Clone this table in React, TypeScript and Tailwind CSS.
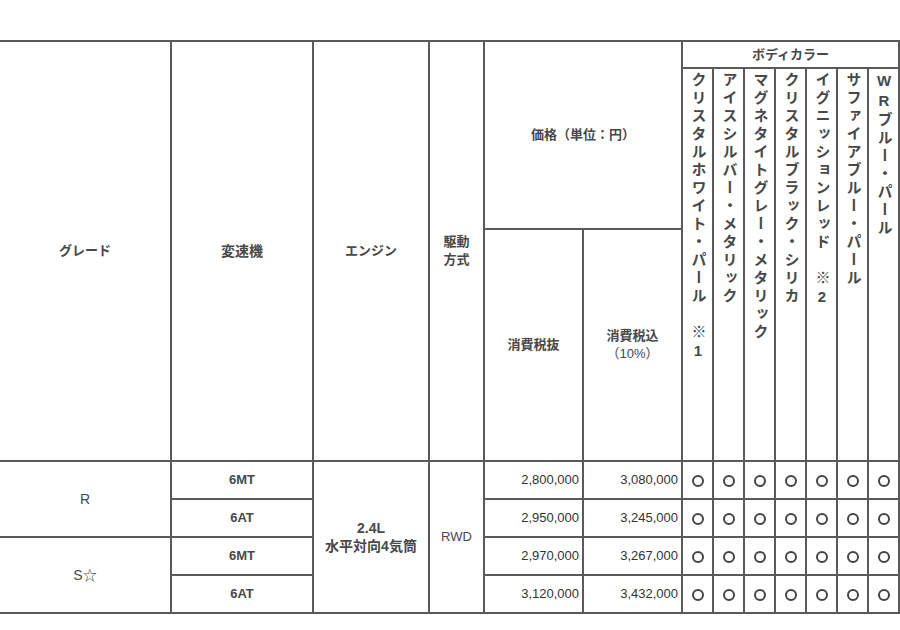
const B = "border-2 border-[#5a5a5a]";

const colors = [
  "クリスタルホワイト・パール　※1",
  "アイスシルバー・メタリック",
  "マグネタイトグレー・メタリック",
  "クリスタルブラック・シリカ",
  "イグニッションレッド　※2",
  "サファイアブルー・パール",
  "WRブルー・パール",
];

const rows = [
  { grade: "R", tm: "6MT", p1: "2,800,000", p2: "3,080,000" },
  { grade: null, tm: "6AT", p1: "2,950,000", p2: "3,245,000" },
  { grade: "S☆", tm: "6MT", p1: "2,970,000", p2: "3,267,000" },
  { grade: null, tm: "6AT", p1: "3,120,000", p2: "3,432,000" },
];

function Circles() {
  return (
    <>
      {colors.map((_, i) => (
        <td key={i} className={`${B} p-0 text-center align-middle`}>
          <span className="inline-block w-[12px] h-[12px] rounded-full border-2 border-[#444] align-middle" aria-label="○"></span>
        </td>
      ))}
    </>
  );
}

export default function App() {
  return (
    <div className="w-[900px] h-[630px] bg-white overflow-hidden pt-[40px] font-['Liberation_Sans','Noto_Sans_CJK_JP',sans-serif] text-[#484848] font-semibold">
      <table className="border-collapse table-fixed w-[898px] text-[13px]">
        <colgroup>
          <col className="w-[171px]" />
          <col className="w-[142px]" />
          <col className="w-[116px]" />
          <col className="w-[55px]" />
          <col className="w-[99px]" />
          <col className="w-[99px]" />
          {colors.map((_, i) => (
            <col key={i} className="w-[31px]" />
          ))}
        </colgroup>
        <thead>
          <tr className="h-[27px]">
            <th rowSpan={3} className={`${B} border-l-0 font-semibold text-center align-middle`}>グレード</th>
            <th rowSpan={3} className={`${B} font-semibold text-center align-middle text-[14px]`}>変速機</th>
            <th rowSpan={3} className={`${B} font-semibold text-center align-middle`}>エンジン</th>
            <th rowSpan={3} className={`${B} font-semibold text-center align-middle leading-[18px] px-[10px]`}>駆動方式</th>
            <th rowSpan={2} colSpan={2} className={`${B} font-semibold text-center align-middle`}>価格（単位：円）</th>
            <th colSpan={7} className={`${B} font-semibold text-center align-middle`}>ボディカラー</th>
          </tr>
          <tr className="h-[161px]">
            {colors.map((c, i) => (
              <th key={i} rowSpan={2} className={`${B} p-0 font-semibold align-top`}>
                <div className="flex justify-center pt-[3px]">
                  <div className="[writing-mode:vertical-rl] [text-orientation:upright] text-[15px] leading-[18px] tracking-[3px]">
                    {c}
                  </div>
                </div>
              </th>
            ))}
          </tr>
          <tr className="h-[232px]">
            <th className={`${B} font-semibold text-center align-middle`}>消費税抜</th>
            <th className={`${B} font-semibold text-center align-middle leading-[18px]`}>
              消費税込
              <br />
              <span className="font-normal">（10%）</span>
            </th>
          </tr>
        </thead>
        <tbody className="text-[13px]">
          {rows.map((r, i) => (
            <tr key={i} className="h-[38px]">
              {r.grade !== null && (
                <td rowSpan={2} className={`${B} border-l-0 text-center align-middle text-[14px] font-normal`}>{r.grade}</td>
              )}
              <td className={`${B} text-center align-middle`}>{r.tm}</td>
              {i === 0 && (
                <>
                  <td rowSpan={4} className={`${B} text-center align-middle leading-[18px] text-[14px]`}>
                    2.4L
                    <br />
                    水平対向4気筒
                  </td>
                  <td rowSpan={4} className={`${B} text-center align-middle font-normal`}>RWD</td>
                </>
              )}
              <td className={`${B} text-right align-middle pr-[3px] text-[13px] font-normal text-[#333]`}>{r.p1}</td>
              <td className={`${B} text-right align-middle pr-[3px] text-[13px] font-normal text-[#333]`}>{r.p2}</td>
              <Circles />
            </tr>
          ))}
        </tbody>
      </table>
    </div>
  );
}
